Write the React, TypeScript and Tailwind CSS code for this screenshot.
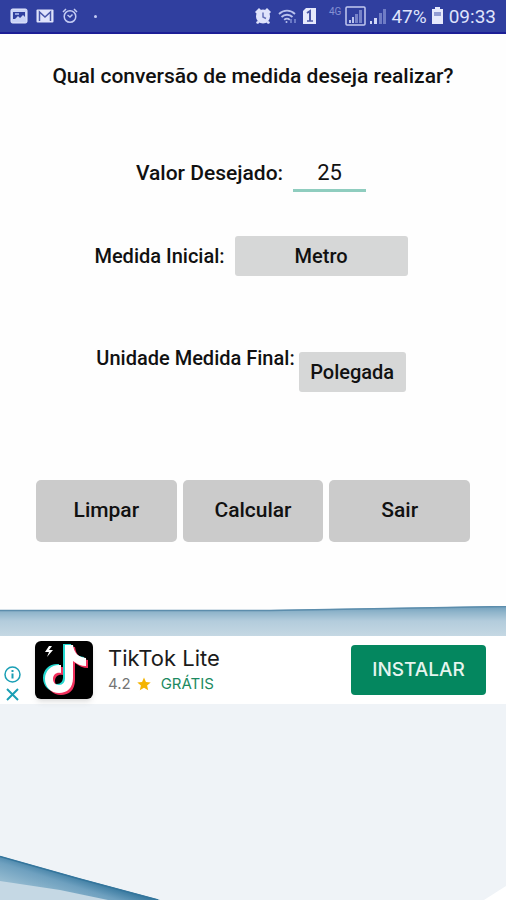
import { useState } from "react";

const StatusBar = () => {
  return (
    <header className="flex h-[34px] items-center justify-between border-b-2 border-[#1c1f96] bg-[#303f9f] px-2.5 text-[#dfe3fb]">
      <div className="flex items-center gap-2">
        <svg width="18" height="16" viewBox="0 0 18 16" fill="none">
          <rect x="1" y="1" width="16" height="14" rx="1.5" fill="#c9d2f6" stroke="#e3e8fd" />
          <path d="M3 11V4h12v5l-2-2-3 3-2-2-3 3z" fill="#303f9f" />
          <path d="M5 5h4v2H5z" fill="#93a0dd" />
        </svg>
        <svg width="18" height="16" viewBox="0 0 18 16" fill="none">
          <rect x="0.5" y="1.5" width="17" height="13" rx="1" fill="#dfe3fb" />
          <path d="M3.5 13V4l5.5 5 5.5-5v9" stroke="#4654a8" strokeWidth="1.5" />
        </svg>
        <svg width="16" height="16" viewBox="0 0 16 16" fill="none" stroke="#c3cbf3" strokeWidth="1.5">
          <circle cx="8" cy="8.5" r="5.8" />
          <path d="M1 4l3-3M15 4l-3-3M5.5 7l2.5 2 2.5-2.5" />
        </svg>
        <span className="ml-2 size-[3px] rounded-full bg-[#c3cbf3]" />
      </div>
      <div className="flex items-center gap-1">
        <svg width="18" height="18" viewBox="0 0 18 18">
          <path d="M1 5l4-4 2 2-4 4zM17 5l-4-4-2 2 4 4zM3 14l-1 2 2 1 2-2zM15 14l1 2-2 1-2-2z" fill="#dfe3fb" />
          <circle cx="9" cy="9.5" r="7" fill="#dfe3fb" />
          <path d="M9 5.5v4.5l3 1.5" stroke="#6571b8" strokeWidth="1.5" fill="none" />
        </svg>
        <svg width="22" height="18" viewBox="0 0 22 18" fill="none" stroke="#b9c2ee" strokeWidth="1.8">
          <path d="M3 7c4.500-4.500 11.500-4.500 16 0M5.500 10c3-3 8-3 11 0M8.200 12.800c1.500-1.500 4-1.500 5.600 0" />
          <circle cx="10.5" cy="15" r="1" fill="#b9c2ee" stroke="none" />
          <path d="M15 16v-4M19 12v4" stroke="#7280ca" />
        </svg>
        <svg width="15" height="18" viewBox="0 0 15 18">
          <path d="M4 1h10v16H1V4z" fill="#e6e9fc" />
          <path d="M5 6l3-2v10" fill="none" stroke="#4b57a6" strokeWidth="2" />
          <path d="M5 14h6" stroke="#4b57a6" strokeWidth="1.5" />
        </svg>
        <span className="mb-2 ml-2 text-[10px] leading-none text-[#8590d2]">4G</span>
        <svg width="21" height="20" viewBox="0 0 21 20">
          <rect x="1" y="1" width="19" height="18" rx="1" fill="none" stroke="#c3caf1" strokeWidth="1.5" />
          <path d="M4 14h2v3H4zM7 11h2v6H7z" fill="#b9c2ee" />
          <path d="M10 8h3v9h-3zM14 4h3v13h-3z" fill="#7783c9" />
        </svg>
        <svg width="17" height="18" viewBox="0 0 17 18">
          <path d="M0 14h2v3H0zM4 11h3v6H4z" fill="#d3d9f7" />
          <path d="M9 6h3v11H9zM13 2h3v15h-3z" fill="#6f7cc5" />
        </svg>
        <span className="text-[19px] leading-none">47%</span>
        <svg width="14" height="18" viewBox="0 0 14 18">
          <path d="M4 0h5v2h3v15H1V2h3z" fill="#e6e9fc" />
          <path d="M3 5h7v4H3z" fill="#929cd3" />
        </svg>
        <span className="text-[19px] leading-none">09:33</span>
      </div>
    </header>
  );
};

const TikTokLogo = () => {
  const note =
    "M28 4h8c1 8 5 12 13 13v8c-5 0-9-2-13-5v17c0 10-6 15-14 15S8 46 8 38c0-9 7-15 16-14v8c-5-1-8 2-8 6 0 3 2 6 6 6s6-3 6-7z";
  return (
    <svg width="58" height="58" viewBox="0 0 58 58" className="rounded-md bg-black shadow-md" role="img" aria-label="TikTok Lite">
      <path d={note} fill="#25d8d0" transform="translate(0 -1)" />
      <path d={note} fill="#f0305c" transform="translate(4 2)" />
      <path d={note} fill="#fff" transform="translate(2 0)" />
      <path d="M14 5l-4 6h4l-2 5 6-7h-4l3-4z" fill="#fff" />
    </svg>
  );
};

const AdBanner = () => {
  return (
    <aside className="flex h-[68px] items-center bg-white font-['Inter',sans-serif]">
      <div className="flex w-[35px] flex-col gap-1 self-end pb-0.5 pl-1 text-[#1a9fb5]">
        <button type="button" aria-label="Info">
          <svg width="17" height="17" viewBox="0 0 17 17" fill="none" stroke="currentColor" strokeWidth="1.5">
            <circle cx="8.5" cy="8.5" r="7.5" />
            <path d="M8.500 7.500v5M8.500 4v2" strokeWidth="2" />
          </svg>
        </button>
        <button type="button" aria-label="Fechar">
          <svg width="17" height="15" viewBox="0 0 17 15" fill="none" stroke="currentColor" strokeWidth="2">
            <path d="M3 2l11 11M14 2L3 13" />
          </svg>
        </button>
      </div>
      <TikTokLogo />
      <div className="ml-[15px] flex flex-1 flex-col gap-1">
        <p className="text-[22px] leading-6 text-[#1b1b1b]">TikTok Lite</p>
        <div className="flex items-center text-[15px] leading-5">
          <span className="text-[#757575]">4.2</span>
          <svg width="14" height="14" viewBox="0 0 24 24" fill="#f4b400" className="ml-1.5">
            <path d="M12 1l3.300 7.500 8.200.800-6.200 5.400 1.900 8L12 18.500l-7.200 4.200 1.900-8L.500 9.300l8.200-.800z" />
          </svg>
          <span className="ml-2.5 text-[#1c8a61]">GRÁTIS</span>
        </div>
      </div>
      <button
        type="button"
        className="mr-5 h-[50px] w-[135px] rounded bg-[#04875f] text-[19px] font-medium text-[#e6f5ef]"
      >
        INSTALAR
      </button>
    </aside>
  );
};

const App = () => {
  const [valor, setValor] = useState("25");

  return (
    <div className="flex min-h-screen flex-col bg-[#eff3f7] font-['Roboto',sans-serif] text-[#111]">
      <StatusBar />
      <main className="bg-[#fefefe] pb-16 pt-7">
        <h1 className="text-center text-[21px] font-medium leading-7">
          Qual conversão de medida deseja realizar?
        </h1>

        <div className="mt-[66px] flex items-center justify-center gap-2.5 pr-1">
          <label htmlFor="valor" className="text-[21px] font-medium">
            Valor Desejado:
          </label>
          <input
            id="valor"
            type="text"
            inputMode="numeric"
            value={valor}
            onChange={(e) => setValor(e.target.value)}
            className="h-9 w-[73px] border-b-[3px] border-[#8fcdbf] text-center text-[22px] outline-none"
          />
        </div>

        <div className="mt-11 flex items-center justify-center gap-2.5 pr-1">
          <span id="inicial" className="text-[20px] font-medium">
            Medida Inicial:
          </span>
          <button
            type="button"
            aria-describedby="inicial"
            className="h-10 w-[173px] rounded-[3px] bg-[#d6d7d7] text-[20px] font-medium"
          >
            Metro
          </button>
        </div>

        <div className="mt-[76px] flex items-start justify-center gap-1 pr-1">
          <span id="final" className="text-[20px] font-medium leading-3">
            Unidade Medida Final:
          </span>
          <button
            type="button"
            aria-describedby="final"
            className="h-10 w-[107px] rounded-[3px] bg-[#d6d7d7] text-[20px] font-medium"
          >
            Polegada
          </button>
        </div>

        <div className="mt-[88px] grid grid-cols-3 gap-1.5 px-9 text-[21px] font-medium">
          <button type="button" onClick={() => setValor("")} className="h-[62px] rounded-[5px] bg-[#cbcbcb]">
            Limpar
          </button>
          <button type="button" className="h-[62px] rounded-[5px] bg-[#cbcbcb]">
            Calcular
          </button>
          <button type="button" className="h-[62px] rounded-[5px] bg-[#cbcbcb]">
            Sair
          </button>
        </div>
      </main>

      {/* top edge of the folded paper background */}
      <svg viewBox="0 0 506 30" preserveAspectRatio="none" className="h-[30px] w-full bg-[#fefefe]" aria-hidden="true">
        <defs>
          <linearGradient id="fold" x1="0" y1="0" x2="0" y2="1">
            <stop offset="0" stopColor="#6f9fbc" />
            <stop offset="0.2" stopColor="#8fb4ca" />
            <stop offset="0.5" stopColor="#b3ccdc" />
            <stop offset="1" stopColor="#c5d8e3" />
          </linearGradient>
        </defs>
        <path d="M0 4L270 4L506 0V30H0z" fill="url(#fold)" />
        <path d="M0 4.500L270 4.500L506 0.500" fill="none" stroke="#5c8dac" strokeWidth="1.5" />
      </svg>

      <AdBanner />

      <div className="flex flex-1 items-end justify-between">
        <svg width="160" height="46" viewBox="0 0 160 46" aria-hidden="true">
          <defs>
            <linearGradient id="corner" x1="80" y1="23" x2="72" y2="48" gradientUnits="userSpaceOnUse">
              <stop offset="0" stopColor="#3b7ba1" />
              <stop offset="0.4" stopColor="#6ea0bf" />
              <stop offset="1" stopColor="#92b9cf" />
            </linearGradient>
          </defs>
          <path d="M0 2L78 24L160 46H0z" fill="url(#corner)" />
          <path d="M0 27L60 36L108 46H0z" fill="#c5d8e4" />
          <path d="M0 2.500L78 24.500L158 46" fill="none" stroke="#34759c" strokeWidth="1.5" />
        </svg>
        <svg width="22" height="14" viewBox="0 0 22 14" aria-hidden="true">
          <path d="M22 0v14H0z" fill="#fff" />
        </svg>
      </div>
    </div>
  );
};

export default App;
